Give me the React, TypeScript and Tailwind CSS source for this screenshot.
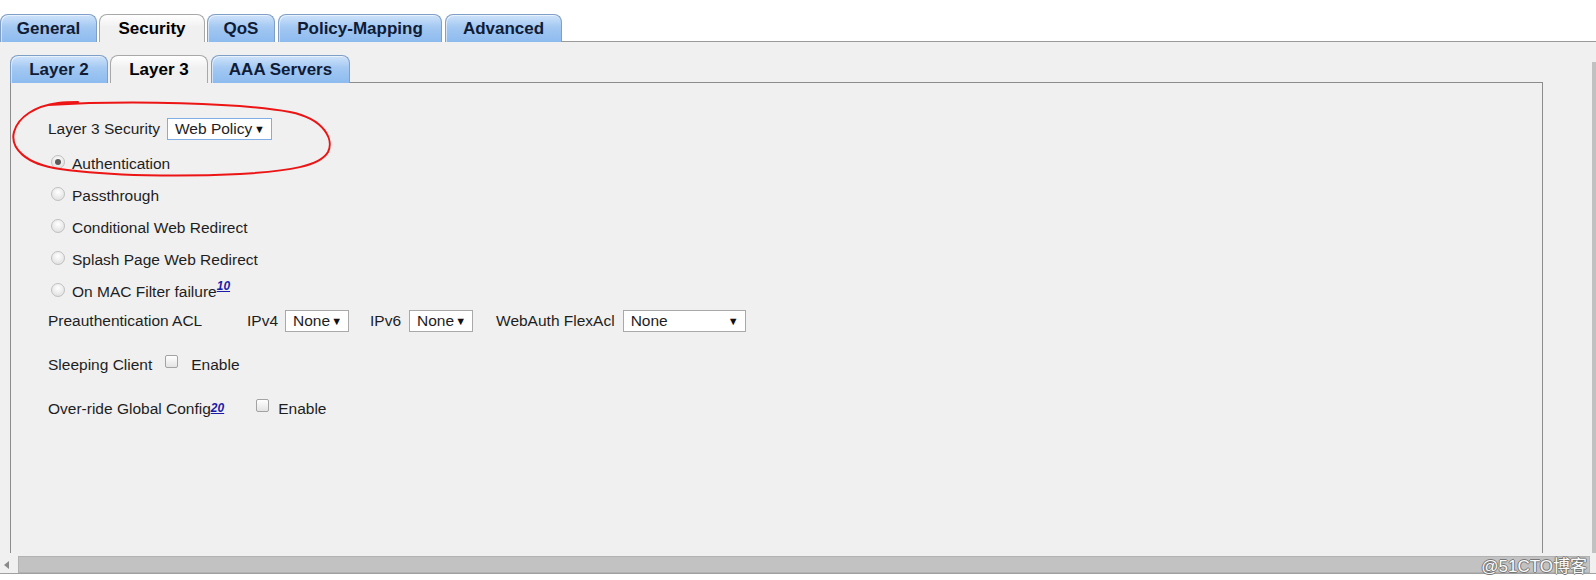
import React from 'react';

const sans = "[font-family:'Liberation_Sans',Arial,sans-serif]";

function Tab({ label, active, w, ml }: { label: string; active?: boolean; w: string; ml?: string }) {
  return (
    <div
      className={`${w} ${ml ?? ''} h-[28px] shrink-0 rounded-t-[8px] border border-b-0 flex items-center justify-center text-[17px] font-bold leading-none ${
        active
          ? 'border-[#a8a8a8] bg-[linear-gradient(#ffffff,#f0f0f0_45%)] text-black'
          : 'border-[#7f9fc6] bg-[linear-gradient(#cfe3fa,#a3c8f2_45%,#8dbbef)] text-[#101c36] shadow-[inset_1px_1px_0_rgba(255,255,255,0.55)]'
      }`}
    >
      {label}
    </div>
  );
}

function Select({ value, w, focus }: { value: string; w: string; focus?: boolean }) {
  return (
    <div
      className={`${w} h-[22px] shrink-0 bg-white border flex items-center justify-between pl-[7px] pr-[6px] ${
        focus ? 'border-[#7eaee3]' : 'border-[#a9a9a9]'
      }`}
    >
      <span>{value}</span>
      <span className="text-[11px] text-[#111]">▼</span>
    </div>
  );
}

function Radio({ checked }: { checked?: boolean }) {
  return (
    <span className="w-[14px] h-[14px] ml-[3px] mb-[5px] shrink-0 rounded-full border border-[#c0c0c0] bg-[radial-gradient(circle_at_50%_35%,#ffffff,#dadada)] flex items-center justify-center">
      {checked && <span className="w-[6px] h-[6px] rounded-full bg-[#5a5a5a]" />}
    </span>
  );
}

function Check({ ml }: { ml: string }) {
  return (
    <span className={`${ml} w-[13px] h-[13px] mb-[8px] shrink-0 rounded-[2px] border border-[#a3a3a3] bg-[linear-gradient(#ffffff,#e3e3e3)]`} />
  );
}

function Sup({ n }: { n: string }) {
  return (
    <span className="self-start mt-[4px] text-[12px] font-bold italic underline text-[#1b1ba8] leading-none">{n}</span>
  );
}

export default function App() {
  const radios = [
    { label: 'Authentication', checked: true },
    { label: 'Passthrough' },
    { label: 'Conditional Web Redirect' },
    { label: 'Splash Page Web Redirect' },
    { label: 'On MAC Filter failure', sup: '10' },
  ];

  return (
    <div className={`${sans} w-[1596px] h-[580px] bg-white relative overflow-hidden flex flex-col text-[#1e1e1e]`}>
      {/* top tabs */}
      <div className="h-[42px] pt-[14px] flex items-end shrink-0">
        <Tab label="General" w="w-[97px]" />
        <Tab label="Security" w="w-[106px]" ml="ml-[2px]" active />
        <Tab label="QoS" w="w-[68px]" ml="ml-[2px]" />
        <Tab label="Policy-Mapping" w="w-[164px]" ml="ml-[3px]" />
        <Tab label="Advanced" w="w-[117px]" ml="ml-[3px]" />
        <div className="flex-1 h-[28px] border-b border-[#9a9a9a]" />
      </div>

      {/* middle */}
      <div className="h-[511px] flex shrink-0 bg-[#f0f0f0]">
        <div className="w-[1592px] pl-[10px] pt-[13px] flex flex-col">
          <div className="w-[1533px] h-[28px] flex items-end">
            <Tab label="Layer 2" w="w-[98px]" />
            <Tab label="Layer 3" w="w-[98px]" ml="ml-[2px]" active />
            <Tab label="AAA Servers" w="w-[139px]" ml="ml-[3px]" />
            <div className="flex-1 h-[28px] border-b border-[#8c8c8c]" />
          </div>
          <div className="w-[1533px] h-[470px] border-l border-r border-[#8c8c8c] pl-[37px] pt-[35px] text-[15.5px] leading-none">
            <div className="h-[22px] flex items-center">
              <span>Layer 3 Security</span>
              <span className="ml-[7px]">
                <Select value="Web Policy" w="w-[105px]" focus />
              </span>
            </div>
            <div className="mt-[8px] flex flex-col">
              {radios.map((r) => (
                <div key={r.label} className="h-[32px] flex items-center">
                  <Radio checked={r.checked} />
                  <span className="ml-[7px]">{r.label}</span>
                  {r.sup && <Sup n={r.sup} />}
                </div>
              ))}
            </div>
            <div className="mt-[2px] h-[22px] flex items-center">
              <span className="w-[199px] shrink-0">Preauthentication ACL</span>
              <span>IPv4</span>
              <span className="ml-[7px]"><Select value="None" w="w-[64px]" /></span>
              <span className="ml-[21px]">IPv6</span>
              <span className="ml-[8px]"><Select value="None" w="w-[64px]" /></span>
              <span className="ml-[23px]">WebAuth FlexAcl</span>
              <span className="ml-[8px]"><Select value="None" w="w-[123px]" /></span>
            </div>
            <div className="mt-[22px] h-[22px] flex items-center">
              <span>Sleeping Client</span>
              <Check ml="ml-[13px]" />
              <span className="ml-[13px]">Enable</span>
            </div>
            <div className="mt-[22px] h-[22px] flex items-center">
              <span>Over-ride Global Config</span>
              <Sup n="20" />
              <Check ml="ml-[32px]" />
              <span className="ml-[9px]">Enable</span>
            </div>
          </div>
        </div>
        <div className="w-[4px] pt-[20px] flex flex-col">
          <div className="flex-1 bg-[#c1c1c1]" />
        </div>
      </div>

      {/* bottom scrollbar */}
      <div className="h-[27px] flex flex-col shrink-0">
        <div className="h-[3px] bg-[#f0f0f0]" />
        <div className="h-[17px] flex bg-[#f0f0f0]">
          <div className="w-[18px] flex items-center pl-[4px]">
            <span className="w-0 h-0 border-y-[4px] border-y-transparent border-r-[5px] border-r-[#8a8a8a]" />
          </div>
          <div className="w-[1572px] bg-[#c2c2c2] border border-[#b2b2b2]" />
        </div>
        <div className="h-[1px] bg-[#a0a0a0]" />
        <div className="flex-1 bg-white" />
      </div>

      {/* watermark */}
      <div className="absolute right-[9px] bottom-[5px] text-[17px] leading-none text-[#fafafa] [font-family:'Liberation_Sans','Noto_Sans_CJK_SC',sans-serif] [text-shadow:1px_0_0_#777,-1px_0_0_#777,0_1px_0_#777,0_-1px_0_#777]">
        @51CTO博客
      </div>

      {/* red annotation */}
      <svg className="absolute left-0 top-0 pointer-events-none" width="1596" height="580" viewBox="0 0 1596 580">
        <path
          d="M 48 105 C 130 100, 240 103, 290 112 C 325 119, 334 140, 328 152 C 320 166, 290 171, 240 174 C 180 177, 110 176, 60 169 C 25 164, 10 148, 14 132 C 18 117, 35 106, 58 103 C 66 102, 72 102, 78 102"
          fill="none"
          stroke="#ec1414"
          strokeWidth="2"
          strokeLinecap="round"
        />
      </svg>
    </div>
  );
}
